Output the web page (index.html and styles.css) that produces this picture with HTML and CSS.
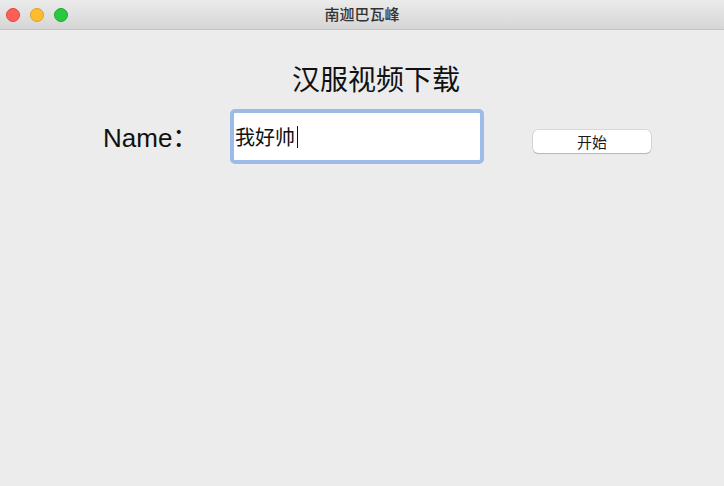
FILE: index.html
```html
<!DOCTYPE html>
<html lang="zh-CN">
<head>
    <meta charset="UTF-8">
    <meta name="viewport" content="width=device-width, initial-scale=1.0">
    <title>南迦巴瓦峰</title>
    <link rel="stylesheet" href="styles.css">
</head>
<body>
    <div class="window">
        <div class="title-bar">
            <div class="lights">
                <span class="light close"></span>
                <span class="light minimize"></span>
                <span class="light zoom"></span>
            </div>
            <div class="title">南迦巴瓦峰</div>
        </div>

        <div class="content">
            <h1 class="heading">汉服视频下载</h1>
            <div class="form-row">
                <label class="name-label" for="name">Name：</label>
                <div class="text-field" id="name">
                    <span class="field-text">我好帅</span><span class="caret"></span>
                </div>
                <button class="start-button" type="button">开始</button>
            </div>
        </div>
    </div>
</body>
</html>
```

FILE: styles.css
```css
body {
    margin: 0;
    font-family: "Liberation Sans", "Noto Sans CJK SC", sans-serif;
    background-color: #ececec;
    height: 100vh;
    overflow: hidden;
}

.window {
    display: flex;
    flex-direction: column;
    height: 100vh;
    background: #ececec;
}

.title-bar {
    position: relative;
    height: 29px;
    background: linear-gradient(#ebebeb, #d6d6d6);
    border-bottom: 1px solid #c4c4c4;
    display: flex;
    align-items: center;
}

.lights {
    display: flex;
    gap: 10px;
    padding-left: 6px;
}

.light {
    width: 14px;
    height: 14px;
    border-radius: 50%;
    box-sizing: border-box;
}

.light.close {
    background-color: #fd5f57;
    border: 0.5px solid #e2463f;
}

.light.minimize {
    background-color: #febc2e;
    border: 0.5px solid #e0a023;
}

.light.zoom {
    background-color: #29c840;
    border: 0.5px solid #1aab29;
}

.title {
    position: absolute;
    left: 0;
    right: 0;
    top: 0;
    line-height: 28px;
    text-align: center;
    font-family: "Noto Sans CJK SC", sans-serif;
    font-size: 15px;
    font-weight: 500;
    color: #333;
}

.content {
    padding-top: 34px;
}

.heading {
    margin: 0 0 0 292px;
    font-family: "Noto Sans CJK SC", sans-serif;
    font-size: 28px;
    line-height: 28px;
    font-weight: 400;
    color: #111;
}

.form-row {
    display: flex;
    align-items: flex-start;
    margin-top: 17px;
    padding-left: 103px;
}

.name-label {
    width: 127px;
    margin-top: 14px;
    font-size: 26px;
    line-height: 30px;
    color: #111;
}

.text-field {
    width: 254px;
    height: 55px;
    box-sizing: border-box;
    border: 4px solid #9dbbe7;
    border-radius: 5px;
    background: #fff;
    display: flex;
    align-items: center;
    padding-left: 1px;
    font-family: "Noto Sans CJK SC", sans-serif;
    font-size: 20px;
    color: #111;
}

.caret {
    display: inline-block;
    width: 1px;
    height: 22px;
    margin-left: 2px;
    background: #111;
}

.start-button {
    width: 118px;
    height: 23px;
    margin: 21px 0 0 49px;
    padding: 0;
    border: none;
    border-radius: 5px;
    background: #fff;
    box-shadow: 0 0 0 0.5px rgba(0, 0, 0, 0.18), 0 1px 1px rgba(0, 0, 0, 0.15);
    font-family: "Noto Sans CJK SC", sans-serif;
    font-size: 15px;
    line-height: 23px;
    color: #1a1a1a;
}
```
